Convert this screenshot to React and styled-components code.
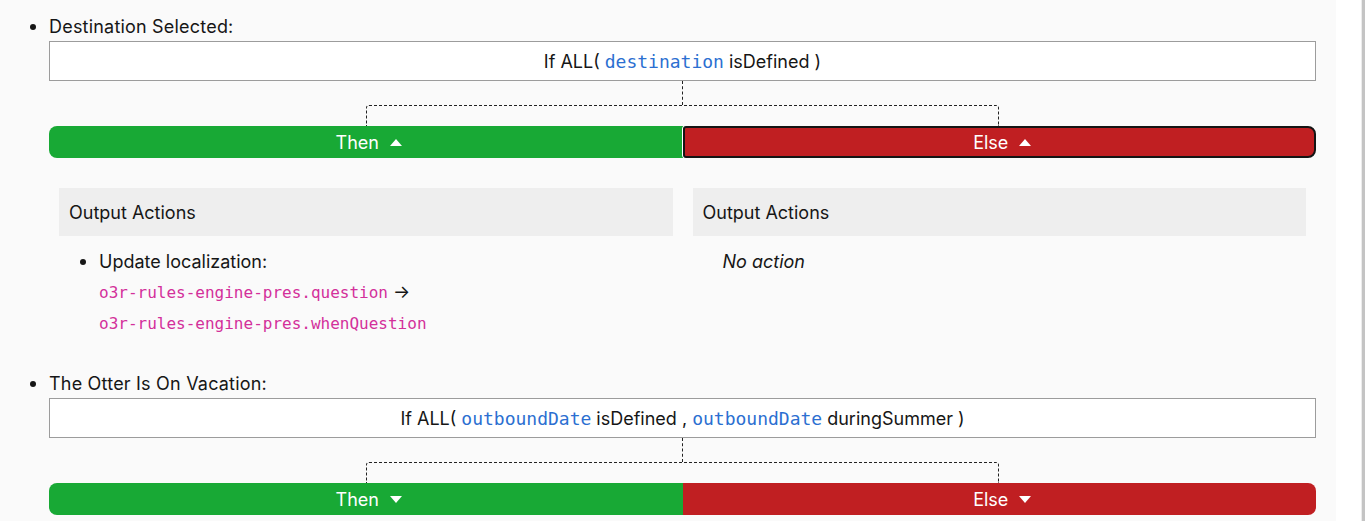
import React from 'react'
import styled, { createGlobalStyle } from 'styled-components'

const GlobalStyle = createGlobalStyle`
  html, body {
    margin: 0;
    padding: 0;
    background: #fff;
    overflow: hidden;
  }
  body {
    font-family: Inter, "Noto Sans", sans-serif;
    color: #161616;
  }
`

const rules = [
  {
    name: 'Destination Selected:',
    condition: [{ field: 'destination', op: 'isDefined' }],
    open: true,
    active: 'else',
    thenActions: [
      {
        label: 'Update localization:',
        from: 'o3r-rules-engine-pres.question',
        to: 'o3r-rules-engine-pres.whenQuestion'
      }
    ],
    elseActions: []
  },
  {
    name: 'The Otter Is On Vacation:',
    condition: [
      { field: 'outboundDate', op: 'isDefined' },
      { field: 'outboundDate', op: 'duringSummer' }
    ],
    open: false
  }
]

const Caret = ({ up }) => (
  <svg width="12" height="7" viewBox="0 0 12 7">
    <path d={up ? 'M0 7 L6 0 L12 7 Z' : 'M0 0 L6 7 L12 0 Z'} fill="#fff" />
  </svg>
)

const App = () => {
  return (
    <Page>
      <GlobalStyle />
      <Main>
        <RuleList>
          {rules.map((rule) => (
            <RuleItem key={rule.name}>
              <RuleName>{rule.name}</RuleName>
              <ConditionBox>
                If ALL(
                {rule.condition.map((c, i) => (
                  <React.Fragment key={i}>
                    {i > 0 && ' ,'}
                    <Field>{c.field}</Field>
                    {c.op}
                  </React.Fragment>
                ))}
                {' )'}
              </ConditionBox>
              <Connector>
                <Stem />
                <Fork />
              </Connector>
              <Branches>
                <Branch $tone="then">
                  Then <Caret up={rule.open} />
                </Branch>
                <Branch $tone="else" $active={rule.active === 'else'}>
                  Else <Caret up={rule.open} />
                </Branch>
              </Branches>
              {rule.open && (
                <Outputs>
                  <Panel>
                    <PanelHeader>Output Actions</PanelHeader>
                    <ActionList>
                      {rule.thenActions.map((a) => (
                        <Action key={a.label}>
                          {a.label}
                          <CodeLine>
                            <Code>{a.from}</Code> →
                          </CodeLine>
                          <CodeLine>
                            <Code>{a.to}</Code>
                          </CodeLine>
                        </Action>
                      ))}
                    </ActionList>
                  </Panel>
                  <Panel>
                    <PanelHeader>Output Actions</PanelHeader>
                    <NoAction>No action</NoAction>
                  </Panel>
                </Outputs>
              )}
            </RuleItem>
          ))}
        </RuleList>
      </Main>
      <Gutter />
      <ScrollTrack />
    </Page>
  )
}

export default App

const Page = styled.div`
  display: flex;
  height: 521px;
  overflow: hidden;
`
const Main = styled.div`
  width: 1336px;
  flex-shrink: 0;
  background: #fafafa;
  padding: 13px 20px 0 0;
  box-sizing: border-box;
`
const Gutter = styled.div`
  flex: 1;
  background: #fff;
`
const ScrollTrack = styled.div`
  width: 3px;
  background: #c4c4c4;
  border-left: 1px solid #ececec;
`
const RuleList = styled.ul`
  margin: 0;
  padding-left: 49px;
  font-size: 18px;
  line-height: 27px;
  list-style-type: disc;
`
const RuleItem = styled.li`
  margin-bottom: 31px;
  &::marker {
    font-size: 19px;
  }
`
const RuleName = styled.div`
  height: 28px;
  letter-spacing: 0.2px;
`
const ConditionBox = styled.div`
  height: 40px;
  box-sizing: border-box;
  border: 1px solid #9c9c9c;
  background: #fff;
  display: flex;
  align-items: center;
  justify-content: center;
  white-space: pre;
`
const Field = styled.code`
  font-family: "DejaVu Sans Mono", "Liberation Mono", monospace;
  font-size: 18px;
  color: #2c6fd1;
  margin: 0 5px;
`
const Connector = styled.div`
  height: 45px;
  display: flex;
  flex-direction: column;
  align-items: center;
`
const Stem = styled.div`
  width: 0;
  height: 24px;
  border-left: 1px dashed #222;
`
const Fork = styled.div`
  width: 50%;
  flex: 1;
  box-sizing: border-box;
  border: 1px dashed #222;
  border-bottom: none;
  border-radius: 3px 3px 0 0;
`
const Branches = styled.div`
  display: flex;
  height: 32px;
`
const Branch = styled.div`
  width: 50%;
  flex-shrink: 0;
  display: flex;
  align-items: center;
  justify-content: center;
  gap: 11px;
  padding-left: 6px;
  color: #fff;
  font-size: 18px;
  box-sizing: border-box;
  background: ${(p) => (p.$tone === 'then' ? '#18a935' : '#c01f22')};
  border-radius: ${(p) => (p.$tone === 'then' ? '8px 0 0 8px' : '0 8px 8px 0')};
  ${(p) =>
    p.$active &&
    `
    border: 2px solid #141414;
    border-radius: 3px 8px 8px 3px;
    box-shadow: -1px 0 0 #fff;
  `}
`
const Outputs = styled.div`
  display: grid;
  grid-template-columns: 1fr 1fr;
  gap: 20px;
  padding: 30px 10px 0;
`
const Panel = styled.div`
  display: flex;
  flex-direction: column;
`
const PanelHeader = styled.div`
  height: 48px;
  background: #eeeeee;
  display: flex;
  align-items: center;
  padding: 0 10px;
`
const ActionList = styled.ul`
  margin: 11px 0 0;
  padding-left: 40px;
  line-height: 30px;
  list-style-type: disc;
`
const Action = styled.li`
  &::marker {
    font-size: 19px;
  }
`
const CodeLine = styled.div``
const Code = styled.code`
  font-family: "DejaVu Sans Mono", "Liberation Mono", monospace;
  font-size: 16px;
  color: #d3309a;
`
const NoAction = styled.div`
  margin-top: 11px;
  padding-left: 30px;
  line-height: 30px;
  font-style: italic;
`
